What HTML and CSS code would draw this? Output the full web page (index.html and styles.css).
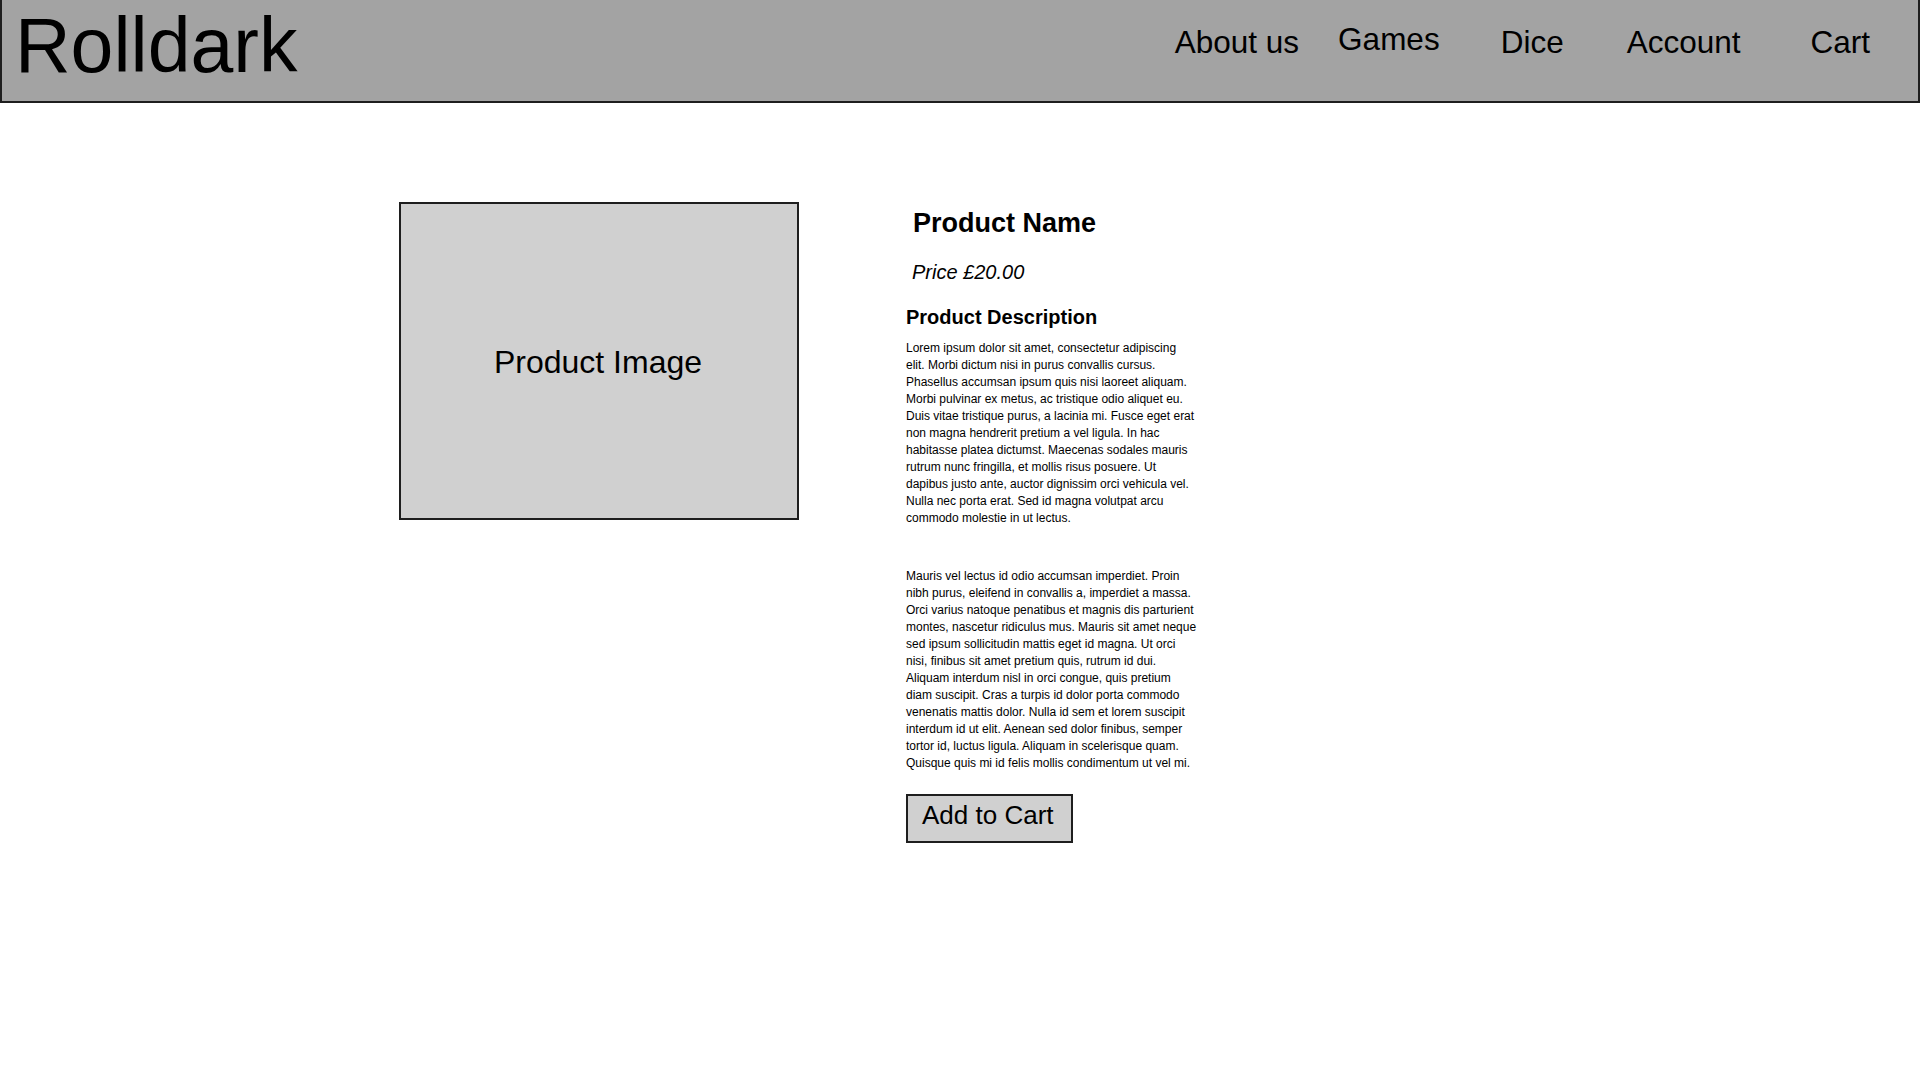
FILE: index.html
```html
<!DOCTYPE html>
<html lang="en">
<head>
<meta charset="utf-8">
<title>Rolldark - Product</title>
<link rel="stylesheet" href="styles.css">
</head>
<body>
<header class="site-header">
  <div class="logo">Rolldark</div>
  <nav class="nav">
    <a class="nav-link nav-about" href="#">About us</a>
    <a class="nav-link nav-games" href="#">Games</a>
    <a class="nav-link nav-dice" href="#">Dice</a>
    <a class="nav-link nav-account" href="#">Account</a>
    <a class="nav-link nav-cart" href="#">Cart</a>
  </nav>
</header>
<main class="product">
  <div class="product-image">Product Image</div>
  <section class="product-info">
    <h1 class="product-name">Product Name</h1>
    <p class="product-price">Price £20.00</p>
    <h2 class="product-desc-title">Product Description</h2>
    <p class="product-desc">Lorem ipsum dolor sit amet, consectetur adipiscing elit. Morbi dictum nisi in purus convallis cursus. Phasellus accumsan ipsum quis nisi laoreet aliquam. Morbi pulvinar ex metus, ac tristique odio aliquet eu. Duis vitae tristique purus, a lacinia mi. Fusce eget erat non magna hendrerit pretium a vel ligula. In hac habitasse platea dictumst. Maecenas sodales mauris rutrum nunc fringilla, et mollis risus posuere. Ut dapibus justo ante, auctor dignissim orci vehicula vel. Nulla nec porta erat. Sed id magna volutpat arcu commodo molestie in ut lectus.</p>
    <p class="product-desc product-desc-second">Mauris vel lectus id odio accumsan imperdiet. Proin nibh purus, eleifend in convallis a, imperdiet a massa. Orci varius natoque penatibus et magnis dis parturient montes, nascetur ridiculus mus. Mauris sit amet neque sed ipsum sollicitudin mattis eget id magna. Ut orci nisi, finibus sit amet pretium quis, rutrum id dui. Aliquam interdum nisl in orci congue, quis pretium diam suscipit. Cras a turpis id dolor porta commodo venenatis mattis dolor. Nulla id sem et lorem suscipit interdum id ut elit. Aenean sed dolor finibus, semper tortor id, luctus ligula. Aliquam in scelerisque quam. Quisque quis mi id felis mollis condimentum ut vel mi.</p>
    <button class="add-to-cart" type="button">Add to Cart</button>
  </section>
</main>
</body>
</html>
```

FILE: styles.css
```css
* {
  box-sizing: border-box;
}

html, body {
  margin: 0;
  padding: 0;
  background: #ffffff;
  color: #000000;
  font-family: "Liberation Sans", Arial, sans-serif;
}

.site-header {
  display: flex;
  align-items: flex-start;
  height: 103px;
  background: #a3a3a3;
  border: 2px solid #1e1e1e;
  border-top: 0;
  padding: 0 48px 0 13px;
}

.logo {
  margin-top: 7px;
  font-size: 77px;
  line-height: 77px;
  white-space: nowrap;
}

.nav {
  display: flex;
  align-items: flex-start;
  margin-left: auto;
  margin-top: 24px;
}

.nav-link {
  display: block;
  font-size: 31.5px;
  line-height: 37px;
  color: #000000;
  text-decoration: none;
  white-space: nowrap;
}

.nav-games {
  margin-left: 39px;
  margin-top: -3px;
}

.nav-dice {
  margin-left: 61px;
}

.nav-account {
  margin-left: 63px;
}

.nav-cart {
  margin-left: 70px;
}

.product {
  display: flex;
  align-items: flex-start;
  padding: 99px 0 0 399px;
}

.product-image {
  display: flex;
  align-items: center;
  justify-content: center;
  flex: none;
  width: 400px;
  height: 318px;
  padding: 2px 2px 0 0;
  background: #d0d0d0;
  border: 2px solid #1e1e1e;
  font-size: 32px;
  line-height: 37px;
}

.product-info {
  margin-left: 107px;
  padding-top: 6px;
  width: 291px;
}

.product-name {
  margin: 0 0 22px 7px;
  font-size: 27px;
  line-height: 31px;
  font-weight: bold;
}

.product-price {
  margin: 0 0 22px 6px;
  font-size: 20px;
  line-height: 23px;
  font-style: italic;
}

.product-desc-title {
  margin: 0 0 12px 0;
  font-size: 20px;
  line-height: 22px;
  font-weight: bold;
}

.product-desc {
  margin: 0;
  font-size: 12px;
  line-height: 17px;
}

.product-desc-second {
  margin-top: 41px;
}

.add-to-cart {
  display: block;
  margin-top: 22px;
  width: 167px;
  height: 49px;
  padding: 0 0 8px 14px;
  background: #d0d0d0;
  border: 2px solid #1e1e1e;
  border-radius: 0;
  font-family: "Liberation Sans", Arial, sans-serif;
  font-size: 26px;
  line-height: 30px;
  color: #000000;
  text-align: left;
  align-self: flex-start;
}
```
